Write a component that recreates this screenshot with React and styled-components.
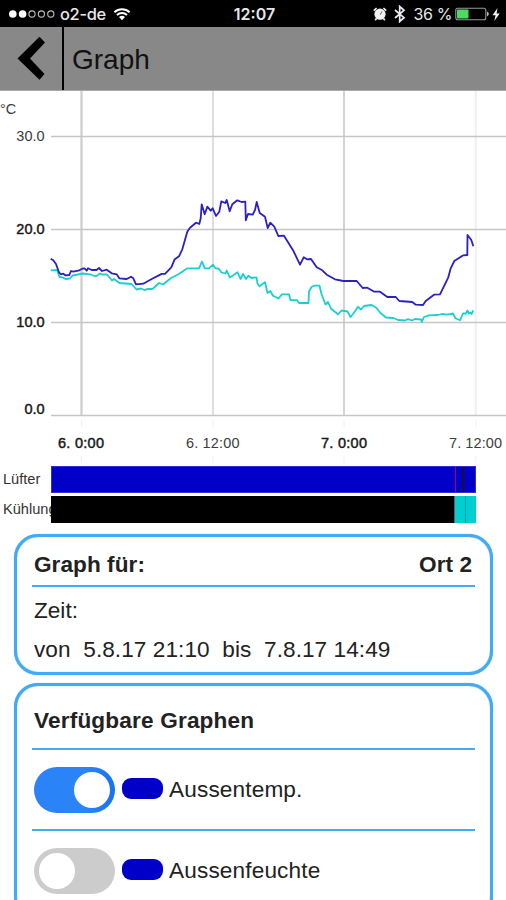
import React from "react";
import styled, { createGlobalStyle } from "styled-components";

const GlobalStyle = createGlobalStyle`
  *, *::before, *::after { box-sizing: border-box; }
  body { margin: 0; background: #fff; overflow: hidden; }
`;

const Screen = styled.main`
  width: 506px;
  height: 900px;
  overflow: hidden;
  display: flex;
  flex-direction: column;
  background: #fff;
  color: #222;
  font-family: "Liberation Sans", Arial, sans-serif;
  font-size: 22.6px;
`;

const StatusBar = styled.div`
  flex: none;
  height: 27px;
  display: grid;
  grid-template-columns: 1fr auto 1fr;
  align-items: center;
  padding: 1px 6px 0 8px;
  background: #000;
  color: #e8e8e8;
  font-family: Inter, Roboto, sans-serif;
  font-size: 16px;
  line-height: 26px;
`;

const StatusGroup = styled.div`
  display: flex;
  align-items: center;
  justify-content: ${(p) => (p.$end ? "flex-end" : "flex-start")};
  white-space: nowrap;
`;

const Carrier = styled.span`
  margin: 0 7px 0 5px;
  font-size: 16.4px;
  font-weight: 500;
  letter-spacing: -0.3px;
`;

const Clock = styled.span`
  font-weight: 600;
  margin-left: 1px;
`;

const BatteryText = styled.span`
  margin: 0 3px 0 8px;
  font-size: 16px;
  letter-spacing: -0.4px;
`;

const Icon = styled.svg`
  display: block;
  flex: none;
  margin-left: ${(p) => p.$gap || 0}px;
`;

const Header = styled.header`
  flex: none;
  height: 63px;
  display: flex;
  background: #888;
`;

const BackButton = styled.button`
  width: 64px;
  padding: 0;
  border: 0;
  border-right: 2px solid #000;
  background: transparent;
`;

const Title = styled.h1`
  margin: 0 0 0 8px;
  font-size: 28px;
  font-weight: 400;
  line-height: 65px;
  color: #111;
`;

const Chart = styled.svg`
  display: block;
  flex: none;
`;

const AxisText = styled.text`
  font-size: ${(p) => p.$size || 14.5}px;
  fill: ${(p) => (p.$strong ? "#111" : "#3c3c3c")};
  stroke: ${(p) => (p.$strong ? "#222" : "none")};
  stroke-width: 0.45px;
  text-anchor: ${(p) => p.$anchor || "start"};
`;

const StateRows = styled.div`
  flex: none;
  display: grid;
  gap: 3px;
  padding: 3px 30px 0 3px;
`;

const StateRow = styled.div`
  display: grid;
  grid-template-columns: 48px 1fr;
  height: 27px;
`;

const StateLabel = styled.span`
  overflow: hidden;
  white-space: nowrap;
  font-size: 14.6px;
  line-height: 26px;
  color: #333;
`;

const StateTrack = styled.div`
  display: flex;
  border: solid ${(p) => p.$edge || "transparent"};
  border-width: ${(p) => (p.$edge ? 1 : 0)}px;
`;

const Segment = styled.span`
  flex: ${(p) => (p.$width ? `0 0 ${p.$width}px` : "1")};
  background: ${(p) => p.$color};
`;

const Cards = styled.div`
  flex: none;
  display: grid;
  gap: 8px;
  padding: 11px 13px 0 14px;
`;

const Card = styled.section`
  border: 3px solid #43abf3;
  border-radius: 24px;
  padding: 0 15px 6px;
  background: #fff;
  box-shadow: 0 0 1px #43abf3, inset 0 0 1px #43abf3;
`;

const CardHeader = styled.h2`
  display: flex;
  justify-content: space-between;
  align-items: center;
  height: ${(p) => p.$height}px;
  margin: 0;
  padding: 8px 3px 0 2px;
  border-bottom: 2px solid #43abf3;
  font-size: 22.6px;
  font-weight: 700;
  letter-spacing: ${(p) => p.$spacing || 0}px;
`;

const Line = styled.p`
  margin: 0;
  padding: ${(p) => p.$top || 0}px 0 0 2px;
  height: ${(p) => p.$height}px;
  line-height: ${(p) => p.$height}px;
  white-space: pre;
  letter-spacing: ${(p) => p.$spacing || 0}px;
`;

const GraphRow = styled.label`
  display: flex;
  align-items: center;
  height: 81px;
  padding-left: 2px;
  border-bottom: 2px solid #43abf3;
`;

const Toggle = styled.span`
  display: flex;
  justify-content: ${(p) => (p.$on ? "flex-end" : "flex-start")};
  align-items: center;
  width: 81px;
  height: 46px;
  padding: 0 5px;
  border-radius: 23px;
  background: ${(p) => (p.$on ? "linear-gradient(90deg, #2b83f8 65%, #1473ec)" : "#ccc")};
`;

const Knob = styled.span`
  width: 36px;
  height: 36px;
  border-radius: 50%;
  background: #fff;
`;

const Swatch = styled.span`
  width: 41px;
  height: 21px;
  margin: 0 6px 2px 7px;
  border-radius: 9px;
  background: #0000c8;
`;

const GraphName = styled.span`
  letter-spacing: 0.15px;
`;

const outside =
  "50.7,258.7 53.3,260.3 56,264 59,272.3 61,274.3 63.3,273.7 65.3,275.3 69.3,275 71,271 73.3,271.7 79.3,270.3 82.3,268.7 84.7,268.5 86.7,270.7 88,268.3 91.7,270 96.5,270 99,268 102,271 106.7,269.7 111.7,273.3 116.7,274.3 119.3,278.3 126.7,279 131,276.7 133.3,278.3 136,284.3 143.3,283.7 151.7,279 161.7,273.9 165,273.9 171.3,267.3 174.5,259.6 179,256.3 182.3,249.3 187.3,231.7 190,227.7 196,222.7 199.3,224 200.7,218.3 201.7,204.3 204.7,214.3 207.3,206.7 210.7,210.7 212.7,208.3 216,216 219.3,211.7 221.3,201.3 225.3,203 226.7,200 229.7,211.3 232.3,204.3 237.3,200.3 241.7,202 245.3,201.7 245.8,220.3 248,214 252.7,214.7 255,210 256.7,202 259.7,213 265,216.7 267.7,228 270.3,222.7 274.3,226.7 278.3,236 284,235.7 293.3,250.7 300,264.7 303.7,257.3 307,259.3 311,259 316.7,267.3 322.3,270.3 326.7,274.7 335,279.3 343.3,281 356.7,281 362.7,288 367.3,287.7 374.3,291.7 380,291.7 387.3,297 395.7,297 399.3,301 412.3,302 415.7,304.7 423,305 425.7,301 434,294.7 440,294.3 448.3,277.3 450.7,268.3 454.3,261 463.3,255.3 467.3,255 467.5,235 471.3,240 473.3,246.3";

const inside =
  "50.7,270.3 57,270 59.5,277 62.5,277.3 65.5,279 70,278.5 72.5,275.5 78,274.5 83,273.5 91.5,274.7 95.5,276.5 100,273.5 102,274.5 107,274.5 112,280.5 114,279 119.5,283 131.5,284 136.5,289.5 141,288.5 145,290.3 147,289 152.5,289 159,283 163,284.5 171,278 178,274.5 187.5,268.3 199,268.3 202,261.5 204.7,268.3 209,268.3 213,264.7 215.5,268.3 218.5,268.5 221.5,272.5 225.5,273.5 226.7,270.5 229.7,277.5 233,275.5 237.5,272.3 240.5,279 243,274 246,279 248.5,275.7 251.5,278 256.5,277.3 257.5,283.7 259.5,286.3 265,282.3 267.5,293 270.3,291 273,295.7 278.5,298.5 282,294.3 289,294.3 290.5,300.2 297,300.2 299,303 308.5,303 309,291.5 311.5,287 314,285.7 319.5,285.7 321.5,294 325.5,304.5 328,302 331,308.7 338,314.3 341.5,310.5 347.5,311.5 350.5,317 353.5,313.5 358,306.8 361,309.5 364,306 371.5,305 376,307.5 380.5,313 386,317.5 393.5,318 398,320 405,320.5 408,319.2 412,320.5 415,319 421,319.5 421.8,321.8 424,317 429,315.3 438,315 442,314 447,314.7 453,313.5 455.5,318.3 460,320.3 463,313.5 466,313.5 467.5,310.5 469,313.5 470.5,312.5 471.5,314 473.3,310.3";

const yTicks = [
  { label: "30.0", y: 136.5, base: 141 },
  { label: "20.0", y: 229.5, base: 234.3, strong: true },
  { label: "10.0", y: 322.5, base: 327.3, strong: true },
  { label: "0.0", y: 415.5, base: 413.6, strong: true },
];

const xTicks = [
  { label: "6. 0:00", x: 81.5, start: 58, width: 46, strong: true, color: "#cdcdcd", w: 2.2 },
  { label: "6. 12:00", x: 213, start: 186, width: 53.5, color: "#dedede", w: 2 },
  { label: "7. 0:00", x: 344, start: 321, width: 46, strong: true, color: "#cfcfcf", w: 1.8 },
  { label: "7. 12:00", x: 475.8, start: 449, width: 53, color: "#f0f0f0", w: 2 },
];

function TemperatureChart() {
  return (
    <Chart width="506" height="373" viewBox="0 90 506 373">
      <path d="M0 90.5H506" stroke="#aaa" strokeWidth="1" />
      <AxisText x="0" y="114.3" $size={14.5}>°C</AxisText>
      {xTicks.map((t) => (
        <g key={t.label}>
          <path d={`M${t.x} 91V415`} stroke={t.color} strokeWidth={t.w} />
          <path d={`M${t.x} 420V427M${t.x} 456V463`} stroke="#f0f0f0" strokeWidth="1" />
          <AxisText x={t.start} y="447.5" textLength={t.width} $strong={t.strong}>{t.label}</AxisText>
        </g>
      ))}
      {yTicks.map((t) => (
        <g key={t.label}>
          <path d={`M51 ${t.y}H506`} stroke="#c6c6c6" strokeWidth="1.4" />
          <AxisText x="44.6" y={t.base} $strong={t.strong} $anchor="end">{t.label}</AxisText>
        </g>
      ))}
      <polyline points={inside} fill="none" stroke="#1bcfd0" strokeWidth="1.8" strokeLinejoin="round" />
      <polyline points={outside} fill="none" stroke="#2a20c4" strokeWidth="1.8" strokeLinejoin="round" />
    </Chart>
  );
}

function SignalIcon() {
  return (
    <Icon width="47" height="10" viewBox="0 0 47 10">
      <circle cx="4.8" cy="5" r="3.8" fill="#fff" />
      <circle cx="14.6" cy="5" r="3.8" fill="#fff" />
      {[24, 33.4, 42.8].map((x) => (
        <circle key={x} cx={x} cy="5" r="3.1" fill="none" stroke="#bbb" strokeWidth="1.1" />
      ))}
    </Icon>
  );
}

function WifiIcon() {
  return (
    <Icon width="18" height="14" viewBox="0 0 18 14">
      <path d="M1.4 5.2a11 11 0 0 1 15.2 0M4 8a7.2 7.2 0 0 1 10 0" fill="none" stroke="#fff" strokeWidth="2" />
      <path d="M9 13.2 6 10.1a4.4 4.4 0 0 1 6 0Z" fill="#fff" />
    </Icon>
  );
}

function AlarmIcon() {
  return (
    <Icon width="14" height="14" viewBox="0 0 14 14">
      <circle cx="7" cy="7.2" r="5.6" fill="#f2f2f2" />
      <path d="M.8 3.6 3.6 1M13.2 3.6 10.4 1M3.5 11.5 2.2 13.2M10.5 11.5 11.8 13.2" stroke="#eee" strokeWidth="1.7" />
      <path d="M9 4.4 7.2 7.7" fill="none" stroke="#666" strokeWidth="1" />
    </Icon>
  );
}

function BluetoothIcon() {
  return (
    <Icon width="12" height="18" viewBox="0 0 12 18" $gap={7}>
      <path d="M1 5 10 12.7 5.7 16.5V1.5L10 5.3 1 13" fill="none" stroke="#eee" strokeWidth="1.7" />
    </Icon>
  );
}

function BatteryIcon() {
  return (
    <Icon width="35" height="14" viewBox="0 0 35 14">
      <rect x=".8" y="1.2" width="30" height="11.6" rx="2" fill="none" stroke="#999" strokeWidth="1.1" />
      <rect x="2" y="2.4" width="11.5" height="9.2" rx=".8" fill="#4cd964" />
      <path d="M32 4.6c2.4 .9 2.4 3.9 0 4.8Z" fill="#bbb" />
    </Icon>
  );
}

function BoltIcon() {
  return (
    <Icon width="8" height="13" viewBox="0 0 8 13" $gap={2}>
      <path d="M5.5 0 .5 7.2H3.6L2.3 13 7.7 5.6H4.6Z" fill="#f4f4f4" />
    </Icon>
  );
}

const graphs = [
  { name: "Aussentemp.", on: true },
  { name: "Aussenfeuchte", on: false },
];

export default function App() {
  return (
    <>
      <GlobalStyle />
      <Screen>
        <StatusBar>
          <StatusGroup>
            <SignalIcon />
            <Carrier>o2-de</Carrier>
            <WifiIcon />
          </StatusGroup>
          <Clock>12:07</Clock>
          <StatusGroup $end>
            <AlarmIcon />
            <BluetoothIcon />
            <BatteryText>36 %</BatteryText>
            <BatteryIcon />
            <BoltIcon />
          </StatusGroup>
        </StatusBar>
        <Header>
          <BackButton aria-label="Zurück">
            <Icon width="62" height="63" viewBox="0 0 62 63">
              <path d="M17.5 31.5 39.5 9.7 45 15.5 30 31.5 44.5 47 39.5 52.8Z" fill="#000" />
            </Icon>
          </BackButton>
          <Title>Graph</Title>
        </Header>
        <TemperatureChart />
        <StateRows>
          <StateRow>
            <StateLabel>Lüfter</StateLabel>
            <StateTrack $edge="#3030d4">
              <Segment $width={403} $color="#0000c8" />
              <Segment $width={1} $color="#a00070" />
              <Segment $width={6} $color="#0000c8" />
              <Segment $width={2} $color="#141428" />
              <Segment $color="#0000c8" />
            </StateTrack>
          </StateRow>
          <StateRow>
            <StateLabel>Kühlung</StateLabel>
            <StateTrack>
              <Segment $width={403} $color="#000" />
              <Segment $width={1} $color="#657" />
              <Segment $width={10} $color="#00cfd1" />
              <Segment $width={1} $color="#078f94" />
              <Segment $color="#00cfd1" />
            </StateTrack>
          </StateRow>
        </StateRows>
        <Cards>
          <Card>
            <CardHeader $height={50} $spacing={0.05}>
              <span>Graph für:</span>
              <span>Ort 2</span>
            </CardHeader>
            <Line $height={46} $top={1}>Zeit:</Line>
            <Line $height={33} $spacing={0.06}>{"von  5.8.17 21:10  bis  7.8.17 14:49"}</Line>
          </Card>
          <Card>
            <CardHeader $height={64} $spacing={0.17}>
              <span>Verfügbare Graphen</span>
            </CardHeader>
            {graphs.map((g) => (
              <GraphRow key={g.name}>
                <Toggle $on={g.on}>
                  <Knob />
                </Toggle>
                <Swatch />
                <GraphName>{g.name}</GraphName>
              </GraphRow>
            ))}
          </Card>
        </Cards>
      </Screen>
    </>
  );
}
